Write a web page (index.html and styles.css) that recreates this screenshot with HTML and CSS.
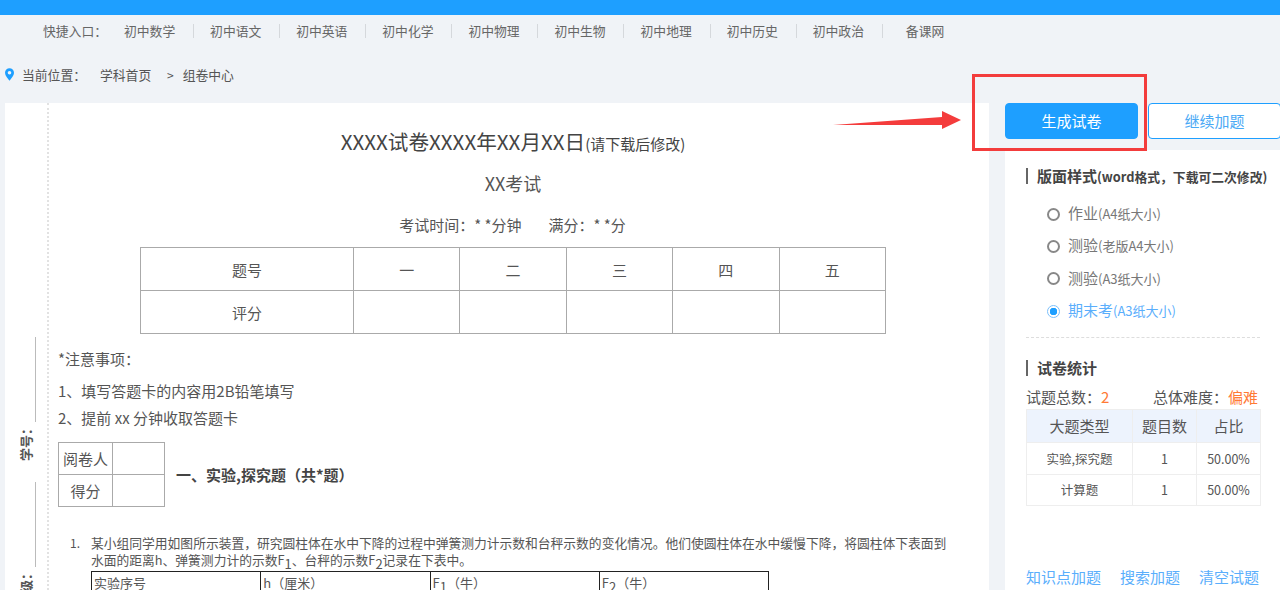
FILE: index.html
```html
<!DOCTYPE html>
<html lang="zh-CN">
<head>
<meta charset="utf-8">
<title>组卷中心</title>
<link rel="stylesheet" href="styles.css">
</head>
<body>
<div class="topbar"></div>
<nav class="quick">
  <span class="quick-label">快捷入口：</span>
  <a class="quick-item">初中数学</a>
  <a class="quick-item">初中语文</a>
  <a class="quick-item">初中英语</a>
  <a class="quick-item">初中化学</a>
  <a class="quick-item">初中物理</a>
  <a class="quick-item">初中生物</a>
  <a class="quick-item">初中地理</a>
  <a class="quick-item">初中历史</a>
  <a class="quick-item">初中政治</a>
  <a class="quick-item quick-last">备课网</a>
</nav>
<div class="crumb">
  <svg class="pin" width="9" height="13" viewBox="0 0 10 14"><path fill-rule="evenodd" fill="#1e9fff" d="M5 0a5 5 0 0 1 5 5c0 3.200-3.200 6.600-5 9-1.800-2.400-5-5.800-5-9a5 5 0 0 1 5-5zm0 3a2 2 0 1 0 0 4 2 2 0 0 0 0-4z"/></svg>
  <span class="crumb-label">当前位置：</span>
  <span class="crumb-home">学科首页</span>
  <span class="crumb-sep">&gt;</span>
  <span>组卷中心</span>
</div>
<main class="main">
  <section class="paper">
    <aside class="binding">
      <i class="bind-line"></i>
      <b class="bind-text">学号：</b>
      <i class="bind-line"></i>
      <b class="bind-text">班级：</b>
    </aside>
    <div class="sheet">
      <h1 class="title">XXXX试卷XXXX年XX月XX日<small>(请下载后修改)</small></h1>
      <p class="subtitle">XX考试</p>
      <p class="examinfo"><span>考试时间：* *分钟</span><span>满分：* *分</span></p>
      <table class="score">
        <colgroup><col class="c1"><col class="c2"><col class="c2"><col class="c2"><col class="c2"><col class="c2"></colgroup>
        <tr><td>题号</td><td>一</td><td>二</td><td>三</td><td>四</td><td>五</td></tr>
        <tr><td>评分</td><td></td><td></td><td></td><td></td><td></td></tr>
      </table>
      <p class="note-head">*注意事项：</p>
      <p class="note">1、填写答题卡的内容用2B铅笔填写</p>
      <p class="note">2、提前 xx 分钟收取答题卡</p>
      <div class="section">
        <table class="marker">
          <tr><td>阅卷人</td><td></td></tr>
          <tr><td>得分</td><td></td></tr>
        </table>
        <h2 class="section-title">一、实验,探究题（共*题）</h2>
      </div>
      <div class="question">
        <span class="q-num">1.</span>
        <div class="q-body">
          <p class="q-text">某小组同学用如图所示装置，研究圆柱体在水中下降的过程中弹簧测力计示数和台秤示数的变化情况。他们使圆柱体在水中缓慢下降，将圆柱体下表面到水面的距离h、弹簧测力计的示数F<sub>1</sub>、台秤的示数F<sub>2</sub>记录在下表中。</p>
          <table class="data">
            <tr><td>实验序号</td><td>h（厘米）</td><td>F<sub>1</sub>（牛）</td><td>F<sub>2</sub>（牛）</td></tr>
          </table>
        </div>
      </div>
    </div>
  </section>
  <section class="side">
    <div class="actions">
      <button class="btn btn-main">生成试卷</button>
      <button class="btn btn-ghost">继续加题</button>
    </div>
    <div class="panel">
      <h3 class="panel-head">版面样式<small>(word格式，下载可二次修改)</small></h3>
      <ul class="radios">
        <li class="radio"><i class="dot"></i><span>作业<small>(A4纸大小)</small></span></li>
        <li class="radio"><i class="dot"></i><span>测验<small>(老版A4大小)</small></span></li>
        <li class="radio"><i class="dot"></i><span>测验<small>(A3纸大小)</small></span></li>
        <li class="radio on"><i class="dot"></i><span>期末考<small>(A3纸大小)</small></span></li>
      </ul>
      <h3 class="panel-head stats-head">试卷统计</h3>
      <div class="stats">
        <span>试题总数：<em>2</em></span>
        <span>总体难度：<em>偏难</em></span>
      </div>
      <table class="types">
        <colgroup><col class="t1"><col class="t2"><col class="t3"></colgroup>
        <tr class="types-head"><th>大题类型</th><th>题目数</th><th>占比</th></tr>
        <tr><td>实验,探究题</td><td>1</td><td>50.00%</td></tr>
        <tr><td>计算题</td><td>1</td><td>50.00%</td></tr>
      </table>
      <div class="links">
        <a>知识点加题</a>
        <a>搜索加题</a>
        <a>清空试题</a>
      </div>
    </div>
  </section>
</main>
<div class="redbox"></div>
<svg class="arrow" width="130" height="20" viewBox="0 0 130 20"><polygon fill="#f43c3c" points="0,15 109,7 109,1 128,10 109,19 109,15"/></svg>
</body>
</html>
```
FILE: styles.css
```css
* { box-sizing: border-box; }
html, body { margin: 0; height: 590px; overflow: hidden; }
body {
  position: relative;
  background: #f0f3f7;
  color: #555;
  font-family: "Noto Sans CJK SC", "Noto Sans", sans-serif;
  font-size: 13px;
}
p, h1, h2, h3, ul { margin: 0; padding: 0; font-weight: normal; }
table { border-collapse: collapse; table-layout: fixed; }
td, th { padding: 0; font-weight: normal; }
i, em { font-style: normal; }

.topbar { height: 15px; background: #1e9fff; }

.quick { display: flex; align-items: center; height: 32px; padding-left: 43px; line-height: 18px; color: #666; font-size: 12.800px; }
.quick-label { width: 81px; white-space: nowrap; }
.quick-item { width: 86.100px; position: relative; }
.quick-item::after { content: ""; position: absolute; left: 69px; top: 2px; height: 14px; border-left: 1px solid #d5d8dc; }
.quick-last { padding-left: 7px; }
.quick-last::after { display: none; }

.crumb { display: flex; align-items: center; height: 56px; padding: 0 0 2px 5px; color: #555; font-size: 12.800px; }
.pin { margin-right: 8px; }
.crumb-label { width: 78px; white-space: nowrap; }
.crumb-sep { margin: 0 9px 0 15px; font-size: 12px; }
.crumb-home { width: 52px; }

.main { display: flex; align-items: flex-start; gap: 16px; padding-left: 5px; }

.paper { display: flex; width: 984px; height: 487px; background: #fff; overflow: hidden; flex: none; }
.binding { flex: none; width: 44px; border-right: 2px dotted #e2e2e2; padding-top: 234px; display: flex; flex-direction: column; align-items: flex-end; }
.bind-line { display: block; flex: none; width: 1px; height: 85px; margin-right: 11px; background: #bbb; }
.bind-text { flex: none; writing-mode: vertical-rl; text-orientation: sideways; transform: rotate(180deg); width: 16px; height: 60px; line-height: 16px; margin-right: 13px; font-size: 13px; color: #555; text-align: right; white-space: nowrap; }
.sheet { flex: 1; padding-left: 9px; min-width: 0; }

.title { text-align: center; margin-top: 24px; height: 28px; line-height: 28px; font-size: 20.600px; color: #444; padding-right: 21px; white-space: nowrap; }
.title small { font-size: 15px; }
.subtitle { text-align: center; margin-top: 16px; line-height: 24px; font-size: 18px; padding-right: 21px; color: #555; }
.examinfo { display: flex; justify-content: center; gap: 27px; margin-top: 18px; line-height: 24px; font-size: 15px; color: #555; padding-right: 22px; }

.score { margin: 10px 0 0 82px; width: 745px; height: 87px; border: 1px solid #aaa; font-size: 15px; text-align: center; }
.score td { border: 1px solid #aaa; }
.score .c1 { width: 213px; }
.score .c2 { width: 106.400px; }

.note-head { margin-top: 13px; line-height: 24px; font-size: 15px; }
.note { line-height: 27px; font-size: 15px; }
.note-head + .note { margin-top: 6px; }

.section { display: flex; align-items: center; margin-top: 11px; }
.marker { width: 107px; height: 65px; border: 1px solid #aaa; font-size: 15px; text-align: center; }
.marker td { border: 1px solid #aaa; }
.marker td:first-child { width: 54px; }
.section-title { margin-left: 11px; font-size: 15px; font-weight: 700; color: #444; }

.question { display: flex; margin-top: 27px; padding-left: 12px; }
.q-num { width: 21px; flex: none; line-height: 17px; font-size: 12px; }
.q-body { width: 860px; }
.q-text { line-height: 17px; font-size: 12.780px; color: #555; }
.q-text sub { font-size: 13px; line-height: 0; vertical-align: -4px; }
.data { margin-top: 3px; width: 678px; border: 1px solid #222; font-size: 13px; }
.data td { border: 1px solid #222; padding-left: 2px; height: 22px; }
.data sub { font-size: 13px; line-height: 0; vertical-align: -4px; }

.side { flex: none; width: 275px; }
.actions { display: flex; gap: 10px; height: 36px; }
.btn { flex: none; width: 133px; height: 36px; border-radius: 4px; font-family: inherit; font-size: 15px; border: 1px solid #1e9fff; padding: 0 0 2px; }
.btn-main { background: #1e9fff; color: #fff; }
.btn-ghost { background: #fff; color: #4aa9f5; }

.panel { margin-top: 11px; height: 440px; padding: 14px 20px 0 21px; background: #fff; }
.panel-head { height: 24px; line-height: 24px; margin-top: 0; padding-left: 9px; border-left: 2px solid transparent; font-size: 15px; font-weight: 700; color: #444; position: relative; white-space: nowrap; }
.panel-head::before { content: ""; position: absolute; left: -2px; top: 4px; width: 2px; height: 16px; background: #666; }
.panel-head small { font-size: 12.800px; font-weight: 700; }

.radios { list-style: none; margin-top: 9px; padding: 0 0 11px 21px; border-bottom: 1px dashed #ddd; }
.radio { display: flex; align-items: center; height: 32.300px; gap: 8px; font-size: 15px; color: #777; }
.radio span { margin-top: -1px; }
.radio small { font-size: 13px; }
.dot { flex: none; width: 13px; height: 13px; margin-top: 2px; border: 2px solid #888; border-radius: 50%; background: #fff; }
.radio.on { color: #5aaefc; }
.on .dot { border: 1.500px solid #7cc0fb; background: radial-gradient(circle, #1e9fff 0 3.500px, #fff 4px); }

.stats-head { margin-top: 18px; }
.stats { display: flex; justify-content: space-between; margin-top: 5px; padding-right: 2px; line-height: 24px; font-size: 15px; }
.stats em { color: #ff7a35; }
.types { margin-top: 0; width: 235px; font-size: 15px; text-align: center; border: 1px solid #eee; }
.types td, .types th { border: 1px solid #eee; }
.types-head th { height: 33px; padding-bottom: 2px; background: #edf3fd; color: #555; }
.types td { height: 31.500px; font-size: 12.500px; }
.types .t1 { width: 106px; }
.types .t2 { width: 64px; }
.links { display: flex; gap: 19px; margin-top: 59px; line-height: 24px; font-size: 15px; color: #5aaefc; }

.redbox { position: absolute; left: 972px; top: 74px; width: 175px; height: 77px; border: 3px solid #f33c3c; }
.arrow { position: absolute; left: 833px; top: 110px; }
```
